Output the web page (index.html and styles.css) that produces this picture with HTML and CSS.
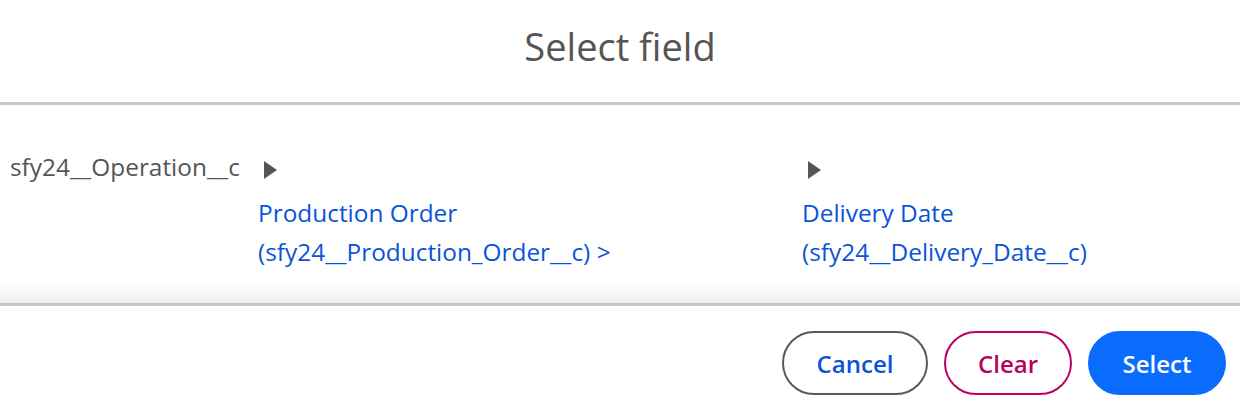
FILE: index.html
```html
<!DOCTYPE html>
<html>
<head>
<meta charset="utf-8">
<link rel="stylesheet" href="styles.css">
</head>
<body>
<div class="dialog">
  <header class="head">
    <h1 class="title">Select field</h1>
  </header>
  <div class="divider"></div>
  <main class="body">
    <div class="col col-root">
      <span class="root-label">sfy24__Operation__c</span>
    </div>
    <div class="col col-mid">
      <svg class="caret" width="14" height="20" viewBox="0 0 14 20"><path d="M0 1 L13 10 L0 19 Z" fill="#555"/></svg>
      <a class="field">Production Order<br>(sfy24__Production_Order__c) &gt;</a>
    </div>
    <div class="col col-last">
      <svg class="caret" width="14" height="20" viewBox="0 0 14 20"><path d="M0 1 L13 10 L0 19 Z" fill="#555"/></svg>
      <a class="field">Delivery Date<br>(sfy24__Delivery_Date__c)</a>
    </div>
  </main>
  <div class="shadow"></div>
  <div class="divider"></div>
  <footer class="foot">
    <button class="btn btn-cancel">Cancel</button>
    <button class="btn btn-clear">Clear</button>
    <button class="btn btn-select">Select</button>
  </footer>
</div>
</body>
</html>
```
FILE: styles.css
```css
html, body {
  margin: 0;
  padding: 0;
  background: #fff;
}
body {
  font-family: "Open Sans", "Noto Sans", sans-serif;
  color: #555;
}
.dialog {
  width: 1240px;
  height: 408px;
  display: flex;
  flex-direction: column;
}
.head {
  height: 102px;
  display: flex;
  justify-content: center;
  flex: none;
}
.title {
  margin: 21px 0 0;
  font-size: 38px;
  font-weight: 400;
  line-height: 50px;
  color: #555;
}
.divider {
  height: 3px;
  background: #c8c8c8;
  flex: none;
}
.body {
  height: 178px;
  flex: none;
  display: grid;
  grid-template-columns: 248px 544px 1fr;
  padding: 48px 0 0 10px;
  box-sizing: border-box;
}
.col {
  display: flex;
  flex-direction: column;
  align-items: flex-start;
}
.root-label {
  font-size: 24.4px;
  line-height: 28px;
  color: #555;
}
.caret {
  margin: 7px 0 0 6px;
  display: block;
}
.field {
  margin-top: 13px;
  font-size: 24.4px;
  line-height: 39px;
  color: #0b54d8;
}
.shadow {
  height: 20px;
  flex: none;
  background: linear-gradient(#fff, #efefef);
}
.foot {
  flex: 1;
  display: flex;
  justify-content: flex-end;
  align-items: flex-start;
  gap: 16px;
  padding: 25px 14px 0 0;
}
.btn {
  height: 64px;
  border-radius: 32px;
  border: 2px solid #5a5a5a;
  background: #fff;
  font-family: "Open Sans", "Noto Sans", sans-serif;
  font-size: 24px;
  font-weight: 600;
  box-sizing: border-box;
  padding: 0;
}
.btn-cancel {
  width: 146px;
  color: #0b54d8;
}
.btn-clear {
  width: 128px;
  color: #b8005c;
  border-color: #c0005e;
}
.btn-select {
  width: 138px;
  background: #0a6cff;
  border-color: #0a6cff;
  color: #fff;
}
```
